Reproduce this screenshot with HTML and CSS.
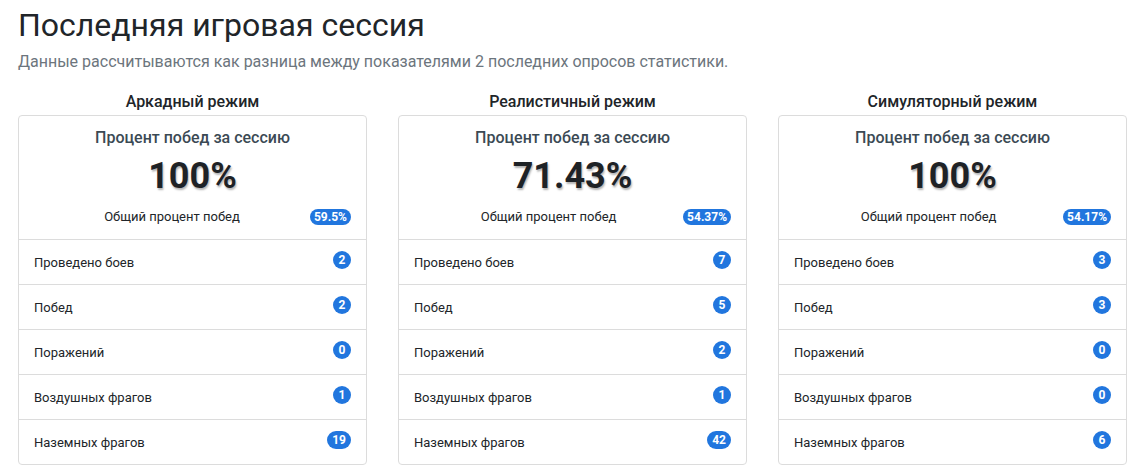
FILE: index.html
```html
<!DOCTYPE html>
<html lang="ru">
<head>
    <meta charset="UTF-8">
    <title>Последняя игровая сессия</title>
    <link rel="stylesheet" href="styles.css">
</head>
<body>
    <div class="page">
        <h1 class="page-title">Последняя игровая сессия</h1>
        <p class="page-lead">Данные рассчитываются как разница между показателями 2 последних опросов статистики.</p>

        <div class="modes">
            <div class="mode">
                <div class="mode-title">Аркадный режим</div>
                <div class="card">
                    <div class="card-top">
                        <div class="card-caption">Процент побед за сессию</div>
                        <div class="card-value">100%</div>
                        <div class="card-total">
                            <span class="total-label">Общий процент побед</span>
                            <span class="badge">59.5%</span>
                        </div>
                    </div>
                    <div class="stat"><span>Проведено боев</span><span class="badge">2</span></div>
                    <div class="stat"><span>Побед</span><span class="badge">2</span></div>
                    <div class="stat"><span>Поражений</span><span class="badge">0</span></div>
                    <div class="stat"><span>Воздушных фрагов</span><span class="badge">1</span></div>
                    <div class="stat"><span>Наземных фрагов</span><span class="badge">19</span></div>
                </div>
            </div>

            <div class="mode">
                <div class="mode-title">Реалистичный режим</div>
                <div class="card">
                    <div class="card-top">
                        <div class="card-caption">Процент побед за сессию</div>
                        <div class="card-value">71.43%</div>
                        <div class="card-total">
                            <span class="total-label">Общий процент побед</span>
                            <span class="badge">54.37%</span>
                        </div>
                    </div>
                    <div class="stat"><span>Проведено боев</span><span class="badge">7</span></div>
                    <div class="stat"><span>Побед</span><span class="badge">5</span></div>
                    <div class="stat"><span>Поражений</span><span class="badge">2</span></div>
                    <div class="stat"><span>Воздушных фрагов</span><span class="badge">1</span></div>
                    <div class="stat"><span>Наземных фрагов</span><span class="badge">42</span></div>
                </div>
            </div>

            <div class="mode">
                <div class="mode-title">Симуляторный режим</div>
                <div class="card">
                    <div class="card-top">
                        <div class="card-caption">Процент побед за сессию</div>
                        <div class="card-value">100%</div>
                        <div class="card-total">
                            <span class="total-label">Общий процент побед</span>
                            <span class="badge">54.17%</span>
                        </div>
                    </div>
                    <div class="stat"><span>Проведено боев</span><span class="badge">3</span></div>
                    <div class="stat"><span>Побед</span><span class="badge">3</span></div>
                    <div class="stat"><span>Поражений</span><span class="badge">0</span></div>
                    <div class="stat"><span>Воздушных фрагов</span><span class="badge">0</span></div>
                    <div class="stat"><span>Наземных фрагов</span><span class="badge">6</span></div>
                </div>
            </div>
        </div>
    </div>
</body>
</html>
```

FILE: styles.css
```css
body {
    margin: 0;
    font-family: Roboto, "Liberation Sans", Arial, sans-serif;
    color: #212529;
    background-color: #fff;
}
.page {
    padding: 0 0 0 18px;
}
.page-title {
    margin: 0;
    padding-top: 5px;
    font-size: 32px;
    font-weight: 400;
    line-height: 40px;
}
.page-lead {
    margin: 7px 0 0;
    font-size: 16px;
    line-height: 20px;
    color: #6c757d;
}
.modes {
    display: grid;
    grid-template-columns: 349px 349px 349px;
    column-gap: 31px;
    margin-top: 20px;
}
.mode-title {
    text-align: center;
    font-size: 16px;
    font-weight: 500;
    line-height: 20px;
    margin-bottom: 3px;
}
.card {
    border: 1px solid #dcdcdc;
    border-radius: 4px;
}
.card-top {
    padding: 12px 15px 13px;
    text-align: center;
}
.card-caption {
    font-size: 16px;
    font-weight: 500;
    line-height: 20px;
    color: #3b4a54;
}
.card-value {
    margin-top: 7px;
    font-size: 36px;
    font-weight: 700;
    line-height: 42px;
    color: #1e2226;
    text-shadow: 1px 2px 2px #b4b4b4;
}
.card-total {
    display: flex;
    align-items: center;
    margin-top: 11px;
    line-height: 18px;
}
.total-label {
    flex-grow: 1;
    font-size: 13px;
}
.badge {
    display: inline-block;
    min-width: 18px;
    box-sizing: border-box;
    padding: 0 5px;
    border-radius: 9px;
    background-color: #2176de;
    color: #fff;
    font-size: 12px;
    font-weight: 700;
    line-height: 18px;
    text-align: center;
}
.card-total .badge {
    line-height: 16px;
    padding: 0 4px;
}
.stat {
    display: flex;
    justify-content: space-between;
    align-items: center;
    height: 45px;
    box-sizing: border-box;
    padding: 0 15px;
    border-top: 1px solid #dcdcdc;
    font-size: 13px;
}
.stat .badge {
    margin-bottom: 5px;
}
```
